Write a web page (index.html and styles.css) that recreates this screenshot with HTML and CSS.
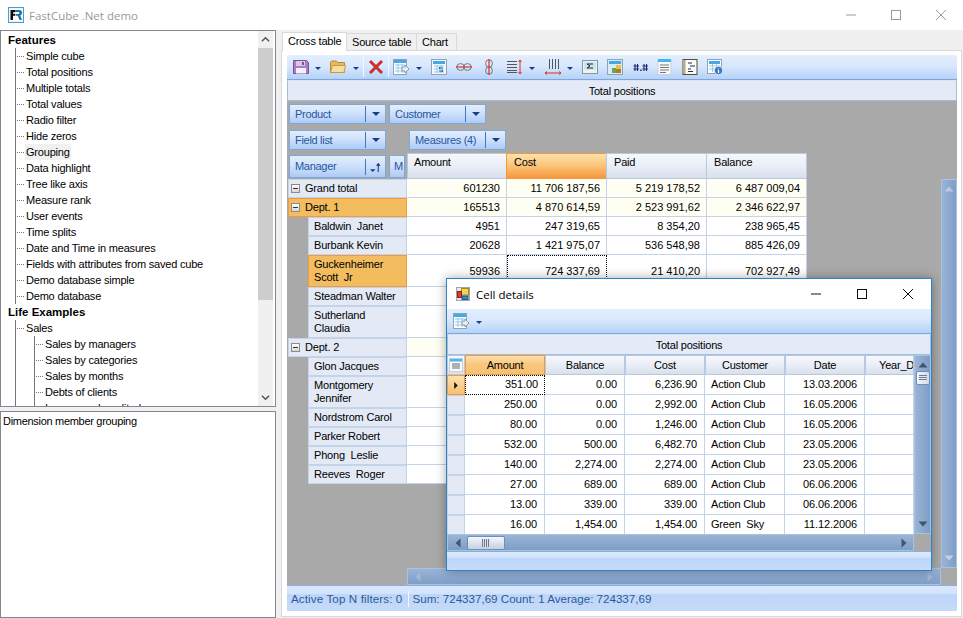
FILE: index.html
```html
<!DOCTYPE html>
<html lang="en">
<head>
<meta charset="utf-8">
<title>FastCube .Net demo</title>
<link rel="stylesheet" href="styles.css">
</head>
<body>
<div class="app">
  <header class="titlebar">
    <svg class="app-icon" viewBox="0 0 16 16"><rect x=".5" y=".5" width="15" height="15" fill="#eaf4fa" stroke="#4f9cc4"/><rect x="2" y="2" width="12" height="12" fill="#fff"/><path d="M2.5 3h5v2.2H5v1.6h2v2H5V13H2.500z" fill="#0a0a0a"/><path d="M7.500 3h3.500c2 0 3 1 3 2.800 0 1.300-.7 2.200-1.800 2.600L14 13h-2.500l-1.600-4.200H7.500V7h2.600c.8 0 1.300-.4 1.300-1.100 0-.7-.5-1-1.300-1H7.500z" fill="#1c6ea4"/></svg>
    <span class="app-title">FastCube .Net demo</span>
    <div class="win-btns">
      <svg viewBox="0 0 10 10"><path d="M0 5h10" stroke="#999" fill="none"/></svg>
      <svg viewBox="0 0 10 10"><rect x=".5" y=".5" width="9" height="9" stroke="#999" fill="none"/></svg>
      <svg viewBox="0 0 10 10"><path d="M0 0l10 10M10 0L0 10" stroke="#999" fill="none"/></svg>
    </div>
  </header>
  <div class="content">
    <aside class="side">
      <div class="tree-box">
        <div class="tree">
          <div class="t-root">Features</div>
          <div class="t-group">
            <div class="t-item"><span>Simple cube</span></div>
            <div class="t-item"><span>Total positions</span></div>
            <div class="t-item"><span>Multiple totals</span></div>
            <div class="t-item"><span>Total values</span></div>
            <div class="t-item"><span>Radio filter</span></div>
            <div class="t-item"><span>Hide zeros</span></div>
            <div class="t-item selected"><span>Grouping</span></div>
            <div class="t-item"><span>Data highlight</span></div>
            <div class="t-item"><span>Tree like axis</span></div>
            <div class="t-item"><span>Measure rank</span></div>
            <div class="t-item"><span>User events</span></div>
            <div class="t-item"><span>Time splits</span></div>
            <div class="t-item"><span>Date and Time in measures</span></div>
            <div class="t-item"><span>Fields with attributes from saved cube</span></div>
            <div class="t-item"><span>Demo database simple</span></div>
            <div class="t-item"><span>Demo database</span></div>
          </div>
          <div class="t-root">Life Examples</div>
          <div class="t-group">
            <div class="t-item"><span>Sales</span></div>
            <div class="t-group sub">
              <div class="t-item"><span>Sales by managers</span></div>
              <div class="t-item"><span>Sales by categories</span></div>
              <div class="t-item"><span>Sales by months</span></div>
              <div class="t-item"><span>Debts of clients</span></div>
              <div class="t-item"><span>Income and credited</span></div>
            </div>
          </div>
        </div>
        <div class="tree-scroll">
          <svg viewBox="0 0 10 6"><path d="M1 5l4-4 4 4" fill="none" stroke="#505050" stroke-width="1.500"/></svg>
          <div class="tree-thumb"></div>
          <svg viewBox="0 0 10 6"><path d="M1 1l4 4 4-4" fill="none" stroke="#505050" stroke-width="1.500"/></svg>
        </div>
      </div>
      <div class="desc">Dimension member grouping</div>
    </aside>
    <main class="right">
      <nav class="tabs">
        <div class="tab active">Cross table</div>
        <div class="tab">Source table</div>
        <div class="tab">Chart</div>
      </nav>
      <section class="panel">
        <div class="toolbar">
          <svg class="ic" viewBox="0 0 16 16"><path d="M.5 1.500h13l2 2v11H.5z" fill="#a77fc4" stroke="#7a4f9c"/><rect x="3" y="2" width="9" height="5" fill="#d8c8e4"/><rect x="3" y="9" width="10" height="5.500" fill="#f4eff8"/><rect x="9" y="3" width="2" height="3" fill="#7a4f9c"/></svg>
          <i class="drop"></i>
          <svg class="ic gap10" viewBox="0 0 16 16"><path d="M.5 3.500l1-1.500h5l1 1.500h7v10H.5z" fill="#e6b860" stroke="#b98a34"/><path d="M.5 13.500l2-7h13l-1.500 7z" fill="#f9dd9a" stroke="#c79a45"/></svg>
          <i class="drop"></i>
          <i class="tsep"></i>
          <svg class="ic" viewBox="0 0 16 16"><path d="M2 2l12 12M14 2L2 14" stroke="#c9302a" stroke-width="3"/></svg>
          <i class="tsep"></i>
          <svg class="ic gap10" viewBox="0 0 16 16"><rect x=".5" y=".5" width="13" height="15" fill="#fff" stroke="#8fa3b5"/><path d="M1 1h12v3H1z" fill="#45a7e4"/><path d="M2 6h10M2 9h10M2 12h10M5 5v9M9 5v9" stroke="#8ecbee"/><path d="M9 8h3V6l4 4-4 4v-2H9z" fill="#e8eef4" stroke="#8a99a8"/></svg>
          <i class="drop"></i>
          <svg class="ic" viewBox="0 0 16 16"><rect x=".5" y=".5" width="15" height="15" fill="#f4f8fb" stroke="#8fa3b5"/><rect x="2" y="2" width="12" height="3" fill="#45a7e4"/><path d="M3 7h10M3 10h10M3 13h10M6 6v8M10 6v8" stroke="#8ecbee"/><path d="M8 12h4l-1-1m1 1-1 1M12 9H8l1-1m-1 1 1 1" stroke="#2c5fa8" fill="none"/></svg>
          <svg class="ic gap11" viewBox="0 0 16 16"><ellipse cx="4.500" cy="8" rx="3.800" ry="3.400" fill="none" stroke="#777"/><ellipse cx="11.500" cy="8" rx="3.800" ry="3.400" fill="none" stroke="#777"/><path d="M0 8h16" stroke="#d8322a" stroke-width="1.200"/></svg>
          <svg class="ic narrow" viewBox="0 0 12 16"><ellipse cx="6" cy="4.500" rx="3.400" ry="3.800" fill="none" stroke="#777"/><ellipse cx="6" cy="11.500" rx="3.400" ry="3.800" fill="none" stroke="#777"/><path d="M6 0v16" stroke="#d8322a" stroke-width="1.200"/></svg>
          <svg class="ic" viewBox="0 0 16 16"><path d="M0 2.500h10M0 5.500h10M0 8.500h10M0 11.500h10M0 13.500h10" stroke="#555"/><path d="M13 1v14M11.500 3L13 1l1.500 2M11.500 13l1.500 2 1.500-2" stroke="#d8322a" fill="none"/></svg>
          <i class="drop gap10"></i>
          <svg class="ic" viewBox="0 0 16 16"><path d="M4.500 0v10M7.500 0v10M10.500 0v10M13.500 0v10" stroke="#555"/><path d="M0 14h16M2 12.500L0 14l2 1.500M14 12.500l2 1.500-2 1.500" stroke="#d8322a" fill="none"/></svg>
          <i class="drop"></i>
          <svg class="ic" viewBox="0 0 16 16"><rect x=".5" y="1.500" width="15" height="13" fill="#eef3ee" stroke="#7f9aa6"/><rect x="2" y="3" width="12" height="8" fill="#cfe4ea"/><path d="M5 5h6M5 9h6M5 5l3 2-3 2" fill="none" stroke="#1d2b3a"/></svg>
          <svg class="ic" viewBox="0 0 16 16"><rect x=".5" y=".5" width="15" height="15" fill="#d6ecf8" stroke="#8fa3b5"/><rect x="2" y="2" width="12" height="3" fill="#45a7e4"/><rect x="9" y="6" width="5" height="8" fill="#e8c33f"/><rect x="5" y="9" width="4" height="5" fill="#6fa24a"/><rect x="9" y="10" width="5" height="4" fill="#b9762e"/></svg>
          <svg class="ic" viewBox="0 0 16 16"><path d="M3 5v7M5.500 5v7M1.500 7h5.500M1.500 10h5.500M12 5v7M14.500 5v7M10.500 7h5.500M10.500 10h5.500" stroke="#1c2d78" stroke-width="1.100"/><rect x="8.200" y="10.500" width="1.500" height="1.500" fill="#1c2d78"/></svg>
          <svg class="ic" viewBox="0 0 16 16"><rect x="1" y=".5" width="13" height="15" fill="#f7f9fb" stroke="#c5d2dc"/><rect x="1" y="0" width="13" height="3" fill="#45b6ec"/><path d="M3 6h9M3 8.500h9M3 11h9M3 13.500h6" stroke="#777"/></svg>
          <svg class="ic" viewBox="0 0 16 16"><rect x="1" y=".5" width="14" height="15" fill="#fbfbf6" stroke="#5b4a36"/><path d="M1 1h2.500v14H1z" fill="#b9a98c"/><path d="M6 4h4M8 7h5M6 10h3M6 12.500h5" stroke="#1d2b6a"/></svg>
          <svg class="ic" viewBox="0 0 16 16"><rect x=".5" y=".5" width="14" height="14" fill="#fff" stroke="#8fa3b5"/><rect x="2" y="2" width="11" height="3" fill="#45a7e4"/><path d="M2 7h11M2 10h11M5.500 5v8M9.500 5v8" stroke="#8ecbee"/><circle cx="11.500" cy="11.500" r="4.200" fill="#3c79c4" stroke="#dbe7f4"/><path d="M11.500 9.500v.8M11.500 11v3" stroke="#fff" stroke-width="1.200"/></svg>
        </div>
        <div class="cap">Total positions</div>
        <div class="stage">
          <div class="filter-row first">
            <div class="fbtn"><span>Product</span><b></b></div>
            <div class="fbtn"><span>Customer</span><b></b></div>
          </div>
          <div class="filter-row second">
            <div class="fbtn"><span>Field list</span><b></b></div>
            <div class="fbtn measures"><span>Measures (4)</span><b></b></div>
          </div>
          <div class="pivot">
            <div class="corner">
              <div class="fbtn tall"><span>Manager</span><b class="sort"><svg viewBox="0 0 10 8"><path d="M0 5.500h5L2.500 8z" fill="#12408a"/><path d="M7.500 8V1M6 2.500L7.500 .5 9 2.500" stroke="#12408a" fill="none"/></svg></b></div>
              <div class="fbtn tall mini"><span>M</span></div>
            </div>
            <div class="ch">Amount</div><div class="ch hot">Cost</div><div class="ch">Paid</div><div class="ch">Balance</div>

            <div class="rh l0"><i class="pm"></i>Grand total</div>
            <div class="c tot">601230</div><div class="c tot">11 706 187,56</div><div class="c tot">5 219 178,52</div><div class="c tot">6 487 009,04</div>

            <div class="rh l0 hot"><i class="pm"></i>Dept. 1</div>
            <div class="c tot">165513</div><div class="c tot">4 870 614,59</div><div class="c tot">2 523 991,62</div><div class="c tot">2 346 622,97</div>

            <div class="rh l1">Baldwin&nbsp; Janet</div>
            <div class="c">4951</div><div class="c">247 319,65</div><div class="c">8 354,20</div><div class="c">238 965,45</div>

            <div class="rh l1">Burbank Kevin</div>
            <div class="c">20628</div><div class="c">1 421 975,07</div><div class="c">536 548,98</div><div class="c">885 426,09</div>

            <div class="rh l1 hot">Guckenheimer Scott&nbsp; Jr</div>
            <div class="c low">59936</div><div class="c low focus">724 337,69</div><div class="c low">21 410,20</div><div class="c low">702 927,49</div>

            <div class="rh l1">Steadman Walter</div>
            <div class="c"></div><div class="c"></div><div class="c"></div><div class="c"></div>

            <div class="rh l1">Sutherland Claudia</div>
            <div class="c"></div><div class="c"></div><div class="c"></div><div class="c"></div>

            <div class="rh l0"><i class="pm"></i>Dept. 2</div>
            <div class="c tot"></div><div class="c tot"></div><div class="c tot"></div><div class="c tot"></div>

            <div class="rh l1">Glon Jacques</div>
            <div class="c"></div><div class="c"></div><div class="c"></div><div class="c"></div>

            <div class="rh l1">Montgomery Jennifer</div>
            <div class="c"></div><div class="c"></div><div class="c"></div><div class="c"></div>

            <div class="rh l1">Nordstrom Carol</div>
            <div class="c"></div><div class="c"></div><div class="c"></div><div class="c"></div>

            <div class="rh l1">Parker Robert</div>
            <div class="c"></div><div class="c"></div><div class="c"></div><div class="c"></div>

            <div class="rh l1">Phong&nbsp; Leslie</div>
            <div class="c"></div><div class="c"></div><div class="c"></div><div class="c"></div>

            <div class="rh l1">Reeves&nbsp; Roger</div>
            <div class="c"></div><div class="c"></div><div class="c"></div><div class="c"></div>
          </div>
          <div class="main-v"><svg viewBox="0 0 10 6"><path d="M5 .5l4.500 5H.5z" fill="#b9c9e0"/></svg><svg viewBox="0 0 10 6"><path d="M5 5.500L.5 .5h9z" fill="#c2d0e4"/></svg></div>
          <div class="main-h"><svg viewBox="0 0 6 10"><path d="M.5 5l5-4.500v9z" fill="#a3b6d3"/></svg><svg viewBox="0 0 6 10"><path d="M5.500 5l-5-4.500v9z" fill="#a3b6d3"/></svg></div>
        </div>
        <div class="statusbar">
          <span class="st-a">Active Top N filters: 0</span><i class="st-sep"></i><span class="st-b">Sum: 724337,69 Count: 1 Average: 724337,69</span>
        </div>
      </section>
    </main>
  </div>

  <div class="dialog">
    <div class="d-title">
      <svg class="d-icon" viewBox="0 0 14 14"><rect x=".5" y=".5" width="13" height="13" fill="#e8e8e8" stroke="#a5a5a5"/><rect x="5.500" y="1.500" width="7" height="6.500" fill="#f6d54d" stroke="#a58a20"/><rect x="1.500" y="4.500" width="4" height="6" fill="#d8402f" stroke="#8c2318"/><rect x="6" y="9" width="6" height="3.500" fill="#3f7fd0" stroke="#25548f"/></svg>
      <span>Cell details</span>
      <div class="d-btns">
        <svg viewBox="0 0 10 10"><path d="M0 5h10" stroke="#111" fill="none"/></svg>
        <svg viewBox="0 0 10 10"><rect x=".5" y=".5" width="9" height="9" stroke="#111" fill="none"/></svg>
        <svg viewBox="0 0 10 10"><path d="M0 0l10 10M10 0L0 10" stroke="#111" fill="none"/></svg>
      </div>
    </div>
    <div class="d-tool">
      <svg class="ic" viewBox="0 0 16 16"><rect x=".5" y=".5" width="13" height="15" fill="#fff" stroke="#8fa3b5"/><path d="M1 1h12v3H1z" fill="#45a7e4"/><path d="M2 6h10M2 9h10M2 12h10M5 5v9M9 5v9" stroke="#8ecbee"/><path d="M9 8h3V6l4 4-4 4v-2H9z" fill="#e8eef4" stroke="#8a99a8"/></svg>
      <i class="drop"></i>
    </div>
    <div class="cap d-cap">Total positions</div>
    <div class="d-body">
      <div class="d-grid">
        <div class="d-h d-ic"><svg viewBox="0 0 14 14"><rect x=".5" y=".5" width="13" height="13" fill="#f7f9fb" stroke="#c5d2dc"/><rect x="1" y="1" width="12" height="2.500" fill="#45b6ec"/><path d="M3 6h8M3 8h8M3 10h8" stroke="#666"/></svg></div>
        <div class="d-h hot">Amount</div><div class="d-h">Balance</div><div class="d-h">Cost</div><div class="d-h">Customer</div><div class="d-h">Date</div><div class="d-h clip">Year_D</div>

        <div class="d-r cur"><svg viewBox="0 0 4 8"><path d="M0 0l4 4-4 4z" fill="#111"/></svg></div>
        <div class="d-c focus">351.00</div><div class="d-c">0.00</div><div class="d-c">6,236.90</div><div class="d-c left">Action Club</div><div class="d-c">13.03.2006</div><div class="d-c"></div>

        <div class="d-r"></div>
        <div class="d-c">250.00</div><div class="d-c">0.00</div><div class="d-c">2,992.00</div><div class="d-c left">Action Club</div><div class="d-c">16.05.2006</div><div class="d-c"></div>

        <div class="d-r"></div>
        <div class="d-c">80.00</div><div class="d-c">0.00</div><div class="d-c">1,246.00</div><div class="d-c left">Action Club</div><div class="d-c">16.05.2006</div><div class="d-c"></div>

        <div class="d-r"></div>
        <div class="d-c">532.00</div><div class="d-c">500.00</div><div class="d-c">6,482.70</div><div class="d-c left">Action Club</div><div class="d-c">23.05.2006</div><div class="d-c"></div>

        <div class="d-r"></div>
        <div class="d-c">140.00</div><div class="d-c">2,274.00</div><div class="d-c">2,274.00</div><div class="d-c left">Action Club</div><div class="d-c">23.05.2006</div><div class="d-c"></div>

        <div class="d-r"></div>
        <div class="d-c">27.00</div><div class="d-c">689.00</div><div class="d-c">689.00</div><div class="d-c left">Action Club</div><div class="d-c">06.06.2006</div><div class="d-c"></div>

        <div class="d-r"></div>
        <div class="d-c">13.00</div><div class="d-c">339.00</div><div class="d-c">339.00</div><div class="d-c left">Action Club</div><div class="d-c">06.06.2006</div><div class="d-c"></div>

        <div class="d-r"></div>
        <div class="d-c">16.00</div><div class="d-c">1,454.00</div><div class="d-c">1,454.00</div><div class="d-c left">Green&nbsp; Sky</div><div class="d-c">11.12.2006</div><div class="d-c"></div>
      </div>
      <div class="d-v">
        <svg class="arr" viewBox="0 0 10 6"><path d="M5 .5l4.500 5H.5z" fill="#44546c"/></svg>
        <div class="thumb-v"></div>
        <svg class="arr end" viewBox="0 0 10 6"><path d="M5 5.500L.5 .5h9z" fill="#44546c"/></svg>
      </div>
      <div class="d-hs">
        <svg class="arrh" viewBox="0 0 6 10"><path d="M.5 5l5-4.500v9z" fill="#44546c"/></svg>
        <div class="thumb-h"></div>
        <svg class="arrh end" viewBox="0 0 6 10"><path d="M5.500 5l-5-4.500v9z" fill="#44546c"/></svg>
      </div>
      <div class="d-cn"></div>
    </div>
    <div class="d-status"></div>
  </div>
</div>
</body>
</html>
```
FILE: styles.css
```css
* { box-sizing: border-box; }
html, body { margin: 0; padding: 0; }
body { width: 963px; height: 618px; overflow: hidden; background: #f0f0f0; font: 11px/13px "Liberation Sans", Arial, sans-serif; color: #000; letter-spacing: -.2px; }
.app { position: relative; width: 963px; height: 618px; display: flex; flex-direction: column; }

.titlebar { height: 30px; background: #fff; display: flex; align-items: center; padding-left: 8px; flex: none; }
.app-icon { width: 16px; height: 16px; margin-right: 5px; }
.app-title { font: 11.500px "Open Sans", sans-serif; letter-spacing: 0; color: #999; }
.win-btns { margin-left: auto; display: flex; gap: 35px; padding-right: 17px; }
.win-btns svg { width: 10px; height: 10px; }

.content { flex: 1; display: flex; min-height: 0; }
.side { width: 276px; flex: none; display: flex; flex-direction: column; gap: 4px; background: #f0f0f0; }
.tree-box { height: 377px; flex: none; border: 1px solid #828790; background: #fff; display: flex; overflow: hidden; }
.tree { flex: 1; overflow: hidden; padding: 1px 0 0 0; }
.t-root { height: 16px; font-weight: bold; line-height: 16px; padding-left: 7px; font-size: 11.500px; letter-spacing: 0; }
.t-group { margin-left: 14px; background: radial-gradient(circle at center, #777 0.5px, transparent 0.8px) 0 0 / 1px 2px repeat-y; }
.t-group.sub { margin-left: 19px; }
.t-item { height: 16px; line-height: 16px; display: flex; align-items: center; white-space: nowrap; }
.t-item::before { content: ""; width: 9px; margin-right: 1px; flex: none; border-top: 1px dotted #777; }
.t-item span { padding: 0 1px; }
.t-item.selected span { background: #f0f0f0; }
.tree-scroll { width: 15px; margin-right: 2px; flex: none; background: #f0f0f0; display: flex; flex-direction: column; align-items: center; }
.tree-scroll svg { width: 9px; height: 17px; flex: none; }
.tree-thumb { width: 15px; height: 252px; background: #cdcdcd; flex: none; }
.tree-scroll svg:last-child { margin-top: auto; }
.desc { flex: 1; border: 1px solid #828790; background: #fff; padding: 3px 2px; letter-spacing: -.3px; }

.right { flex: 1; padding: 2px 1px 1px 5px; display: flex; flex-direction: column; min-width: 0; }
.tabs { display: flex; height: 18px; flex: none; align-items: flex-end; padding-left: 1px; position: relative; z-index: 1; }
.tab { height: 17px; width: 70px; padding: 2px 0 0 5px; background: #f0f0f0; border: 1px solid #d9d9d9; border-bottom: 0; border-left: 0; }
.tab:last-child { width: 40px; }
.tab.active { width: 65px; height: 19px; background: #fff; border-left: 1px solid #d9d9d9; margin-bottom: -1px; }
.panel { flex: 1; background: #fff; border: 1px solid #d9d9d9; padding: 4px 4px 5px 5px; display: flex; flex-direction: column; min-height: 0; }

.toolbar { height: 25px; flex: none; display: flex; align-items: center; padding: 0 0 0 6px; border-radius: 3px 3px 0 0; background: linear-gradient(#e2eefe 0%, #d9e8fd 45%, #b5d2f8 100%); border-bottom: 1px solid #7ea6dc; }
.ic { width: 16px; height: 16px; flex: none; margin-right: 9px; }
.ic.gap10 { margin-right: 10px; }
.ic.gap11 { margin-right: 11px; }
.ic.narrow { width: 12px; margin-right: 12px; }
.drop { width: 0; height: 0; border: 3px solid transparent; border-top: 3px solid #12408a; border-bottom: 0; margin: 2px 9px 0 -3px; flex: none; }
.drop.gap10 { margin-right: 10px; }
.tsep { width: 1px; height: 20px; background: #f4f8fe; margin: 0 4px 0 -5px; flex: none; }
.cap { height: 21px; flex: none; text-align: center; line-height: 20px; background: #e4ebf6; border: 1px solid #a3bedd; border-top-color: #d8e4f3; }

.stage { flex: 1; position: relative; background: #a9a9a9; overflow: hidden; min-height: 0; }
.filter-row { display: flex; padding-left: 2px; gap: 3px; }
.filter-row.first { margin-top: 3px; }
.filter-row.second { margin-top: 6px; }
.fbtn { width: 97px; height: 20px; flex: none; display: flex; align-items: center; border: 1px solid #7ea6d6; background: linear-gradient(#e3eefd 0%, #cfe1fb 45%, #aecbf6 100%); color: #24569e; padding-left: 5px; letter-spacing: -.3px; }
.fbtn span { flex: 1; white-space: nowrap; overflow: hidden; }
.fbtn b { width: 20px; height: 16px; border-left: 1px solid #3f79c0; flex: none; position: relative; }
.fbtn b::after { content: ""; position: absolute; left: 6px; top: 6px; border: 4px solid transparent; border-top: 4px solid #12408a; border-bottom: 0; }
.fbtn b.sort::after { display: none; }
.fbtn b.sort svg { position: absolute; left: 4px; top: 4px; width: 11px; height: 9px; }
.measures { margin-left: 20px; }
.pivot { display: grid; grid-template-columns: 120px repeat(4, 100px); grid-template-rows: 26px 19px 19px 19px 19px 32px 19px 32px 19px 19px 32px 19px 19px 19px 19px; margin-top: 3px; width: 520px; }
.corner { display: flex; gap: 3px; padding: 2px 0 1px 2px; overflow: hidden; }
.fbtn.tall { height: 23px; }
.fbtn.mini { width: 16px; flex: none; padding-left: 4px; }
.ch { padding: 2px 6px; background: linear-gradient(#f6f8fc 0%, #e9eef6 50%, #d8e0ec 100%); border: 1px solid #b5c9e2; margin-left: -1px; }
.ch + .ch { padding-left: 7px; }
.ch:nth-child(2) { margin-left: 0; }
.ch.hot { background: linear-gradient(#fde1ab 0%, #fbc77e 45%, #f7963c 100%); border-color: #f09a3e; }
.rh { background: #e3eaf6; border: 1px solid #c3d3e8; padding: 0 5px; display: flex; align-items: center; line-height: 13px; }
.rh.l0 { margin-left: 1px; }
.rh.l1 { margin-left: 21px; }
.rh.hot { background: #f2bc5f; border-color: #f09a3e; }
.pm { width: 9px; height: 9px; border: 1px solid #8a8a8a; background: linear-gradient(#fff, #d8d8d8); margin: 0 5px 0 -3px; flex: none; position: relative; }
.pm::after { content: ""; position: absolute; left: 1px; top: 3px; width: 5px; height: 1px; background: #333; }
.c { background: #fff; border-right: 1px solid #c3d3e8; border-bottom: 1px solid #c3d3e8; text-align: right; padding: 3px 6px 0 0; white-space: nowrap; letter-spacing: 0; }
.c.tot { background: #fffef2; }
.c.low { padding-top: 10px; }
.c.low.focus { border: 1px dotted #000; padding-top: 9px; }

.main-v { position: absolute; right: 0; top: 78px; width: 16px; height: 389px; background: linear-gradient(90deg, #9ab4d6, #7f9dc6); border: 1px solid #a9c2e0; display: flex; flex-direction: column; justify-content: space-between; align-items: center; padding: 6px 0; }
.main-h { position: absolute; left: 120px; right: 16px; bottom: 0; height: 17px; background: linear-gradient(#9ab4d6, #7f9dc6); border: 1px solid #a9c2e0; display: flex; justify-content: space-between; align-items: center; padding: 0 7px; }
.main-v svg { width: 10px; height: 6px; }
.main-h svg { width: 6px; height: 10px; }

.statusbar { height: 26px; flex: none; display: flex; align-items: center; padding-left: 4px; background: linear-gradient(#d8e8fd 0%, #d2e3fc 30%, #bcd5f8 35%, #c6dbf9 100%); border-top: 1px solid #8cadd8; color: #2a5a9a; font-size: 11.600px; letter-spacing: 0; }
.st-a { letter-spacing: .12px; }
.st-sep { width: 1px; height: 16px; background: #f4f8fe; margin: 0 3px 0 6px; }

.dialog { position: absolute; left: 446px; top: 278px; width: 486px; height: 293px; background: #fff; border: 1px solid #2a84c6; box-shadow: 0 0 10px rgba(0,0,0,.35); display: flex; flex-direction: column; }
.d-title { height: 30px; flex: none; display: flex; align-items: center; padding-left: 9px; font: 11.500px "Open Sans", sans-serif; letter-spacing: 0; }
.d-icon { width: 14px; height: 14px; margin-right: 6px; }
.d-btns { margin-left: auto; display: flex; gap: 36px; padding-right: 18px; }
.d-btns svg { width: 10px; height: 10px; }
.d-tool { height: 25px; flex: none; display: flex; align-items: center; padding-left: 6px; background: linear-gradient(#e2eefe 0%, #d9e8fd 45%, #b5d2f8 100%); border-bottom: 1px solid #7ea6dc; }
.d-tool .ic { margin-right: 7px; }
.d-tool .drop { margin-left: 0; }
.d-cap { height: 21px; }
.d-body { height: 196px; flex: none; display: grid; grid-template-columns: 467px 17px; grid-template-rows: 179px 17px; overflow: hidden; }
.d-grid { display: grid; grid-template-columns: 18px repeat(5, 80px) 49px; grid-auto-rows: 20px; overflow: hidden; }
.d-h { display: flex; align-items: center; justify-content: center; background: linear-gradient(#f6f8fc 0%, #e9eef6 50%, #d8e0ec 100%); border: 1px solid #b5c9e2; }
.d-h.hot { background: linear-gradient(#fde1ab 0%, #fbc77e 45%, #f7c070 100%); border-color: #f09a3e; }
.d-h.clip { overflow: hidden; justify-content: flex-start; padding-left: 13px; white-space: nowrap; }
.d-ic svg { width: 14px; height: 14px; }
.d-r { background: #e3eaf6; border: 1px solid #c3d3e8; display: flex; align-items: center; justify-content: center; }
.d-r.cur { background: linear-gradient(#fde1ab, #f7c070); border-color: #f09a3e; }
.d-r svg { width: 4px; height: 7px; }
.d-c { background: #fff; border-right: 1px solid #c3d3e8; border-bottom: 1px solid #c3d3e8; text-align: right; padding: 3px 7px 0 0; white-space: nowrap; letter-spacing: -.1px; }
.d-c.left { text-align: left; padding-left: 6px; letter-spacing: -.2px; }
.d-c.focus { border: 1px dotted #000; padding-top: 2px; padding-right: 6px; }
.d-v { background: linear-gradient(90deg, #9ab4d6, #7f9dc6); border: 1px solid #a9c2e0; display: flex; flex-direction: column; align-items: center; padding-top: 6px; }
.arr { width: 10px; height: 6px; flex: none; }
.arr.end { margin-top: auto; margin-bottom: 6px; }
.thumb-v { width: 14px; height: 14px; margin-top: 3px; border: 1px solid #6f8fb8; border-radius: 2px; background: repeating-linear-gradient(#6b7b90 0 1px, #e4e9f1 1px 2px) center / 8px 6px no-repeat, linear-gradient(90deg, #f5f7fb, #d0dae8); }
.d-hs { background: linear-gradient(#9ab4d6, #7f9dc6); border: 1px solid #a9c2e0; display: flex; align-items: center; padding-left: 7px; }
.arrh { width: 6px; height: 10px; flex: none; }
.arrh.end { margin-left: auto; margin-right: 6px; }
.thumb-h { width: 38px; height: 14px; margin-left: 6px; border: 1px solid #6f8fb8; border-radius: 2px; background: repeating-linear-gradient(90deg, #6b7b90 0 1px, #d9e0ea 1px 2px) center / 8px 8px no-repeat, linear-gradient(#f5f7fb, #c4d0e0); }
.d-cn { background: #a9a9a9; }
.d-status { flex: 1; background: linear-gradient(#d8e8fd 0%, #d2e3fc 30%, #bcd5f8 35%, #c6dbf9 100%); border-top: 1px solid #8cadd8; }
```
